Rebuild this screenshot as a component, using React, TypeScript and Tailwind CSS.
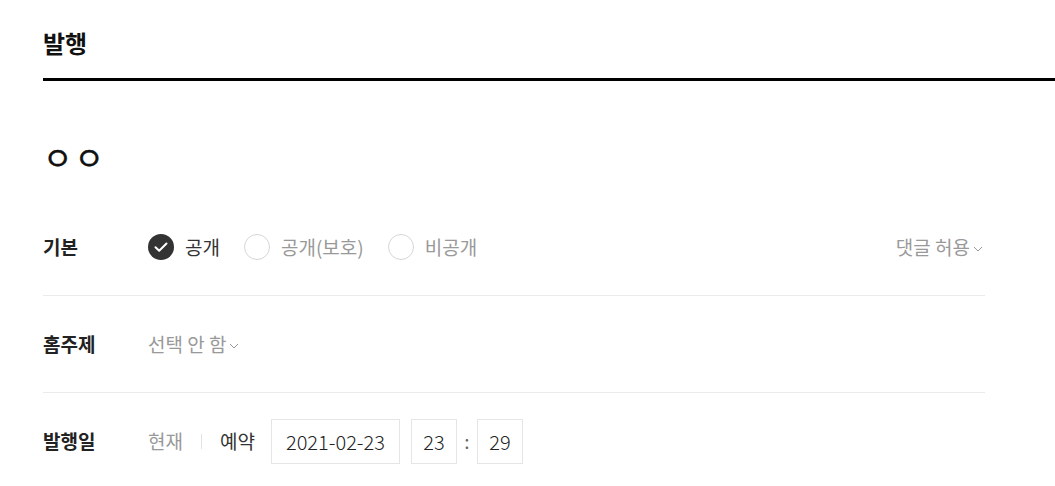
const font = { fontFamily: '"Noto Sans CJK KR", "Noto Sans", sans-serif' };

function Chevron() {
  return (
    <svg width="10" height="6" viewBox="0 0 10 6" className="ml-[3px] mt-[3px]">
      <path d="M1 1 L5 5 L9 1" fill="none" stroke="#999" strokeWidth="1" />
    </svg>
  );
}

function Radio({ label, checked }: { label: string; checked?: boolean }) {
  return (
    <label className="flex items-center gap-[11px] mr-[24px]">
      {checked ? (
        <svg width="26" height="26" viewBox="0 0 26 26">
          <circle cx="13" cy="13" r="13" fill="#333" />
          <path d="M7.5 13.2 L11.2 16.8 L18.5 9.5" fill="none" stroke="#fff" strokeWidth="2" strokeLinecap="round" strokeLinejoin="round" />
        </svg>
      ) : (
        <span className="w-[26px] h-[26px] rounded-full border border-[#d6d6d6]" />
      )}
      <span className={checked ? 'text-[#333]' : 'text-[#999]'}>{label}</span>
    </label>
  );
}

export default function App() {
  return (
    <div className="min-h-screen bg-white pl-[43px] overflow-hidden" style={font}>
      {/* 헤더 */}
      <div className="h-[81px] border-b-[3px] border-black pt-[28px]">
        <h1 className="text-[24px] leading-[30px] font-bold text-[#111]">발행</h1>
      </div>

      <div className="w-[942px]">
        <h2 className="mt-[55px] text-[32px] leading-[40px] text-[#111] tracking-[2px] [-webkit-text-stroke:0.4px_#111]">ㅇㅇ</h2>

        <div className="mt-[23px] text-[19px]">
          {/* 기본 */}
          <div className="h-[97px] flex items-center border-b border-[#ebebeb]">
            <div className="w-[105px] font-bold text-[#222]">기본</div>
            <div className="flex items-center">
              <Radio label="공개" checked />
              <Radio label="공개(보호)" />
              <Radio label="비공개" />
            </div>
            <button className="ml-auto mr-[2px] flex items-center text-[#999]">
              댓글 허용
              <Chevron />
            </button>
          </div>

          {/* 홈주제 */}
          <div className="h-[97px] flex items-center border-b border-[#ebebeb]">
            <div className="w-[105px] font-bold text-[#222]">홈주제</div>
            <button className="flex items-center text-[#999]">
              선택 안 함
              <Chevron />
            </button>
          </div>

          {/* 발행일 */}
          <div className="h-[97px] flex items-center">
            <div className="w-[105px] font-bold text-[#222]">발행일</div>
            <span className="text-[#999]">현재</span>
            <span className="mx-[18px] w-px h-[15px] bg-[#e2e2e2]" />
            <span className="text-[#333]">예약</span>
            <div className="ml-[16px] w-[129px] h-[45px] border border-[#e5e5e5] flex items-center justify-center text-[20px] font-light text-[#222]">
              2021-02-23
            </div>
            <div className="ml-[11px] w-[46px] h-[45px] border border-[#e5e5e5] flex items-center justify-center text-[20px] font-light text-[#222]">
              23
            </div>
            <span className="w-[20px] text-center text-[#666]">:</span>
            <div className="w-[46px] h-[45px] border border-[#e5e5e5] flex items-center justify-center text-[20px] font-light text-[#222]">
              29
            </div>
          </div>
        </div>
      </div>
    </div>
  );
}
